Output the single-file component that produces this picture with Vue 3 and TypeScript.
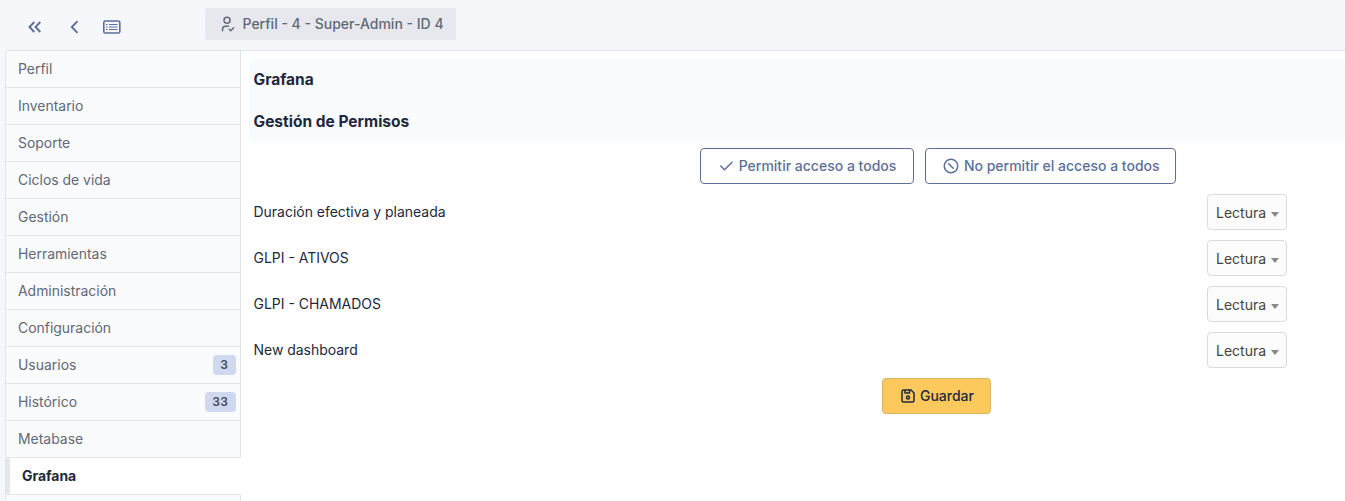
<script setup lang="ts">
interface Tab {
  label: string
  count?: number
  active?: boolean
}

const tabs: Tab[] = [
  { label: 'Perfil' },
  { label: 'Inventario' },
  { label: 'Soporte' },
  { label: 'Ciclos de vida' },
  { label: 'Gestión' },
  { label: 'Herramientas' },
  { label: 'Administración' },
  { label: 'Configuración' },
  { label: 'Usuarios', count: 3 },
  { label: 'Histórico', count: 33 },
  { label: 'Metabase' },
  { label: 'Grafana', active: true },
]

const dashboards: string[] = [
  'Duración efectiva y planeada',
  'GLPI - ATIVOS',
  'GLPI - CHAMADOS',
  'New dashboard',
]
</script>

<template>
  <div class="page">
    <header class="toolbar">
      <nav class="nav-icons">
        <svg class="first" width="14" height="12" viewBox="0 0 14 12"><path d="M6.300 1 1.500 6l4.800 5M12.300 1l-4.800 5 4.800 5" /></svg>
        <svg class="prev" width="9" height="14" viewBox="0 0 9 14"><path d="M7.500 1.200 1.800 7l5.700 5.800" /></svg>
        <svg class="list" width="18" height="14" viewBox="0 0 18 14">
          <rect x=".8" y="1" width="16" height="12" rx="1.500" />
          <path class="thin" d="M6 4.500h8.500M6 7h8.500M6 9.500h8.500M3 4.500h1.600M3 7h1.600M3 9.500h1.600" />
        </svg>
      </nav>
      <div class="title">
        <svg width="18" height="18" viewBox="0 0 24 24">
          <path d="M8 7a4 4 0 1 0 8 0a4 4 0 0 0 -8 0M6 21v-2a4 4 0 0 1 4 -4h4M15 19l2 2l4 -4" />
        </svg>
        <span>Perfil - 4 - Super-Admin - ID 4</span>
      </div>
    </header>
    <div class="body">
      <aside class="tabs">
        <div v-for="tab in tabs" :key="tab.label" class="tab" :class="{ active: tab.active }">
          <span>{{ tab.label }}</span>
          <span v-if="tab.count" class="badge">{{ tab.count }}</span>
        </div>
        <div class="tab"></div>
      </aside>
      <main class="content">
        <section class="panel">
          <h2>Grafana</h2>
          <h2>Gestión de Permisos</h2>
          <div class="bulk">
            <button class="btn outline allow">
              <svg width="18" height="18" viewBox="0 0 24 24"><path d="M5 12l5 5l10 -10" /></svg>
              <span>Permitir acceso a todos</span>
            </button>
            <button class="btn outline deny">
              <svg width="18" height="18" viewBox="0 0 24 24"><circle cx="12" cy="12" r="9" /><path d="M9 9l6 6" /></svg>
              <span>No permitir el acceso a todos</span>
            </button>
          </div>
          <div v-for="name in dashboards" :key="name" class="row">
            <span>{{ name }}</span>
            <div class="select"><span>Lectura</span><i class="caret"></i></div>
          </div>
          <div class="footer">
            <button class="btn save">
              <svg width="18" height="18" viewBox="0 0 24 24">
                <path d="M6 4h10l4 4v10a2 2 0 0 1 -2 2h-12a2 2 0 0 1 -2 -2v-12a2 2 0 0 1 2 -2M14 4v4h-6v-4" />
                <circle cx="12" cy="14" r="2" />
              </svg>
              <span>Guardar</span>
            </button>
          </div>
        </section>
      </main>
    </div>
  </div>
</template>

<style>
body {
  margin: 0;
  overflow: hidden;
}
</style>

<style scoped>
.page {
  width: 100%;
  height: 501px;
  overflow: hidden;
  box-sizing: border-box;
  background: #f5f7fb;
  color: #1e293b;
  font: 400 14px/20px Inter, sans-serif;
}
.page * { box-sizing: border-box; }
svg {
  flex: none;
  fill: none;
  stroke: currentColor;
  stroke-width: 2;
  stroke-linecap: round;
  stroke-linejoin: round;
}
.toolbar {
  display: flex;
  height: 50px;
}
.nav-icons {
  display: flex;
  align-items: center;
  width: 205px;
  height: 53px;
  padding-left: 28px;
  color: #5d6f99;
}
.nav-icons svg { stroke-width: 1.900; stroke-linecap: butt; stroke-linejoin: miter; }
.nav-icons .prev { margin-left: 28px; }
.nav-icons .list { margin-left: 24px; stroke-width: 1.600; }
.nav-icons .thin { stroke-width: 1.200; }
.title {
  display: flex;
  align-items: center;
  width: 251px;
  height: 32px;
  margin-top: 8px;
  padding-left: 12.500px;
  border-radius: 2px;
  background: #e6e8ed;
  color: #626976;
  font-weight: 500;
  white-space: nowrap;
}
.title svg { margin-right: 7px; }
.body {
  display: flex;
  height: 451px;
  margin-left: 5px;
  border-top: 1px solid #e2e4e8;
  border-left: 1px solid #e2e4e8;
  border-top-left-radius: 4px;
  background: #fff;
  overflow: hidden;
}
.tabs {
  flex: none;
  width: 235px;
}
.tab {
  display: flex;
  align-items: center;
  justify-content: space-between;
  height: 37px;
  padding: 0 4px 0 12px;
  border-right: 1px solid #e2e4e8;
  border-bottom: 1px solid #e2e4e8;
  background: #fafbfd;
  color: #626976;
  font-size: 13.950px;
}
.tab.active {
  border-left: 4px solid #e6e7e9;
  border-right-color: #fff;
  background: #fff;
  color: #1e293b;
  font-weight: 700;
}
.badge {
  height: 20px;
  padding: 0 7.500px;
  border-radius: 4px;
  background: #d0d8ef;
  color: #3c4a68;
  font-size: 12px;
  font-weight: 600;
  letter-spacing: .5px;
}
.content {
  flex: 1;
  min-width: 0;
  overflow: hidden;
  padding: 8px 0 0 8px;
}
.panel { width: 1375px; }
h2 {
  height: 42px;
  margin: 0;
  padding-left: 4.500px;
  background: #fafbfd;
  font-size: 15.500px;
  line-height: 41px;
  font-weight: 700;
}
h2 + h2 { height: 41px; }
.bulk {
  display: flex;
  justify-content: center;
  gap: 11px;
  height: 46px;
  padding: 6px 0 4px 2px;
}
.btn {
  display: flex;
  align-items: center;
  justify-content: center;
  height: 36px;
  padding: 0;
  border: 1px solid #5d6f99;
  border-radius: 4px;
  font: 500 14px/20px Inter, sans-serif;
  white-space: nowrap;
}
.btn svg { margin-right: 4px; }
.outline {
  background: #fff;
  color: #5d6f99;
}
.allow { width: 214px; }
.deny { width: 251px; padding-left: 1.500px; }
.row {
  display: flex;
  align-items: center;
  justify-content: space-between;
  height: 46px;
  padding: 2px 337px 0 4.500px;
  font-size: 13.960px;
}
.select {
  display: flex;
  align-items: center;
  width: 80px;
  height: 36px;
  padding: 2px 0 0 8px;
  border: 1px solid #d9dbde;
  border-radius: 4px;
  background: #fcfcfc;
  color: #444;
  font-size: 14px;
}
.caret {
  margin: 3px 0 0 5px;
  border: 4px solid transparent;
  border-top: 5px solid #888;
  border-bottom: 0;
}
.footer {
  display: flex;
  justify-content: center;
  padding-top: 6px;
}
.save {
  width: 109px;
  border-color: #d9b467;
  background: #fec95c;
  color: #1e293b;
}
.save svg { margin-right: 3px; }
</style>
